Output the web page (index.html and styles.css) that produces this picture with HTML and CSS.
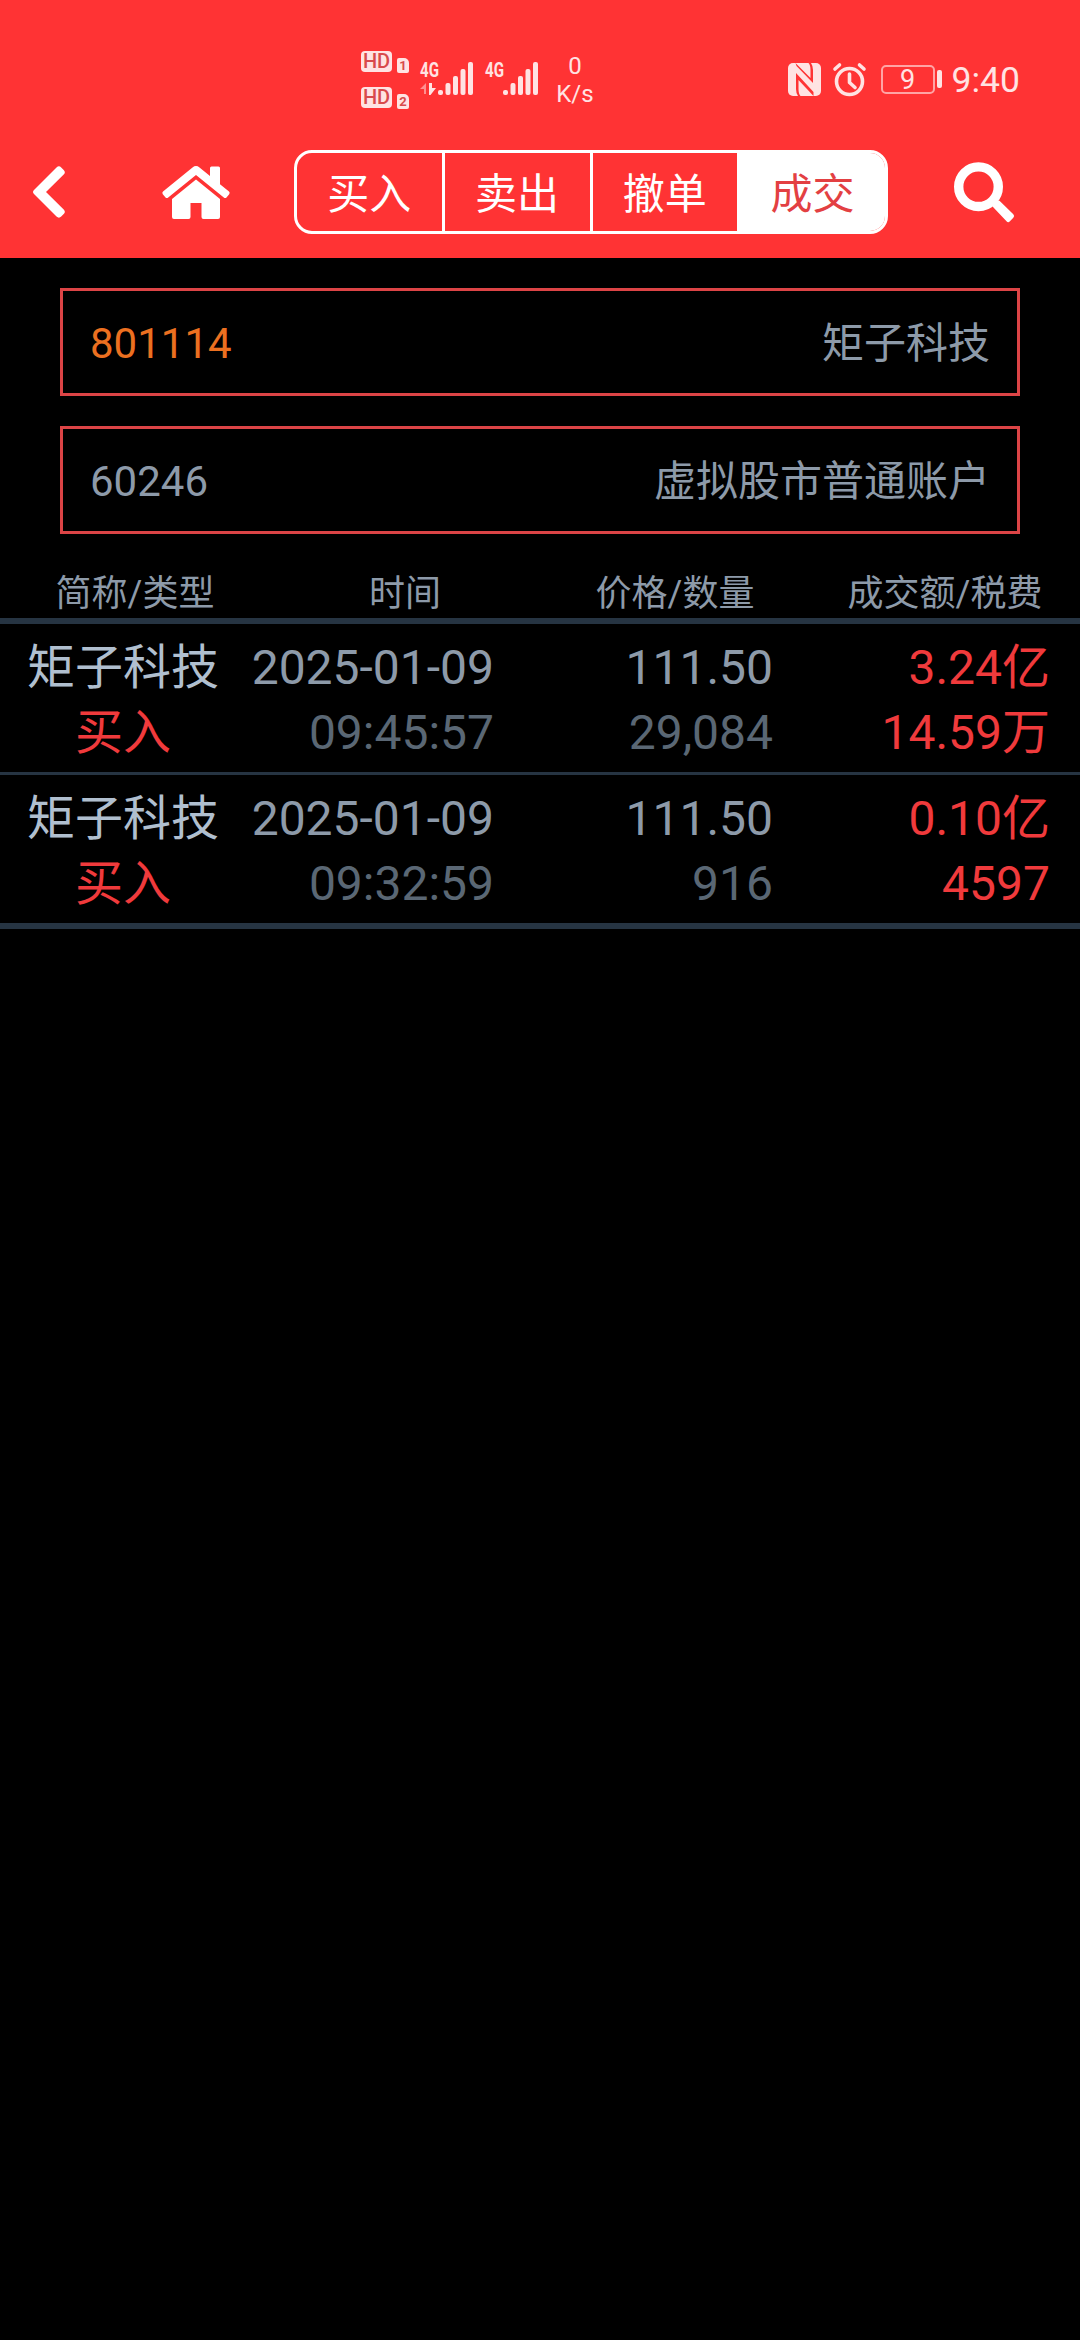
FILE: index.html
```
<!DOCTYPE html>
<html lang="zh-CN">
<head>
  <meta charset="UTF-8" />
  <meta name="viewport" content="width=device-width, initial-scale=1.0" />
  <title>成交</title>
  <link rel="stylesheet" href="styles.css">
</head>
<body>

<header class="header">
  <div class="status-bar">
    <div class="status-left">
      <div class="hd-list">
        <div class="hd-row">
          <span class="hd">HD</span>
          <span class="sim">1</span>
        </div>
        <div class="hd-row">
          <span class="hd">HD</span>
          <span class="sim">2</span>
        </div>
      </div>
      <svg class="signal" width="54" height="34" viewBox="0 0 54 34">
        <text x="0" y="15" class="net-text" textLength="19" lengthAdjust="spacingAndGlyphs">4G</text>
        <path d="M0 27 L6 21 V32 H4 V27z" fill="#ff8f8f"/>
        <path d="M9 21 h3 v5 h4 L10.500 33 H9z" fill="#ffe3e3"/>
        <g fill="#ffe3e3">
          <rect x="18" y="28" width="5" height="5" rx="2"/>
          <rect x="25.500" y="21" width="5" height="12" rx="2"/>
          <rect x="33" y="14" width="5" height="19" rx="2"/>
          <rect x="40.500" y="7" width="5" height="26" rx="2"/>
          <rect x="48" y="0" width="5" height="33" rx="2"/>
        </g>
      </svg>
      <svg class="signal" width="54" height="34" viewBox="0 0 54 34">
        <text x="0" y="15" class="net-text" textLength="19" lengthAdjust="spacingAndGlyphs">4G</text>
        <g fill="#ffe3e3">
          <rect x="18" y="28" width="5" height="5" rx="2"/>
          <rect x="25.500" y="21" width="5" height="12" rx="2"/>
          <rect x="33" y="14" width="5" height="19" rx="2"/>
          <rect x="40.500" y="7" width="5" height="26" rx="2"/>
          <rect x="48" y="0" width="5" height="33" rx="2"/>
        </g>
      </svg>
      <div class="speed"><span>0</span><span>K/s</span></div>
    </div>
    <div class="status-right">
      <svg width="33" height="33" viewBox="0 0 33 33">
        <rect width="33" height="33" rx="5" fill="#ffe3e3"/>
        <path d="M7.500 0 L22.500 15 V7 Q22.500 2 20.500 0 H23 Q25 3 25 7 V20 L8.500 3z" fill="#ff3334"/>
        <path d="M25.500 33 L10.500 17 V26 Q10.500 31 12.500 33 H10 Q8 30 8 26 V10 L25.500 29z" fill="#ff3334"/>
      </svg>
      <svg class="alarm" width="34" height="34" viewBox="0 0 34 34">
        <g fill="none" stroke="#ffe3e3" stroke-linecap="round">
          <circle cx="16.500" cy="18.500" r="13" stroke-width="3.600"/>
          <path d="M16.500 11 V19.500 L22 24.500" stroke-width="3.600" stroke-linejoin="round"/>
          <path d="M2 6 L6.500 2 M31 6 L26.500 2" stroke-width="3.600"/>
        </g>
      </svg>
      <div class="battery">9</div>
      <div class="battery-tip"></div>
      <div class="clock">9:40</div>
    </div>
  </div>

  <nav class="nav-bar">
    <a class="nav-icon back">
      <svg width="32" height="52" viewBox="0 0 32 52">
        <path d="M1 24 L23.500 1.400 Q26 -0.800 28.200 1.400 L30.700 4 Q33 6.300 30.700 8.500 L13 26 L30.700 43.500 Q33 45.800 30.700 48 L28.200 50.600 Q26 52.800 23.500 50.600 L1 28 Q-1 26 1 24z" fill="#fff"/>
      </svg>
    </a>
    <a class="nav-icon home">
      <svg width="68" height="53" viewBox="0 0 68 53">
        <path d="M30.500 1.500 Q34 -1.300 37.500 1.500 L48 10 V2 Q48 .5 49.500 .5 H56.500 Q58 .5 58 2 V18.300 L67 25.600 Q68.300 26.800 67.200 28.200 L64.500 31.400 Q63.200 32.700 61.800 31.600 L34 9 L6.200 31.600 Q4.800 32.700 3.500 31.400 L.8 28.200 Q-.3 26.800 1 25.600z" fill="#fff"/>
        <path d="M34 13.500 L58 33 V51 Q58 53 56 53 H41.500 Q39.500 53 39.500 51 V37 H28.500 V51 Q28.500 53 26.500 53 H12 Q10 53 10 51 V33z" fill="#fff"/>
      </svg>
    </a>
    <div class="tabs">
      <div class="tab">买入</div>
      <div class="tab">卖出</div>
      <div class="tab">撤单</div>
      <div class="tab active">成交</div>
    </div>
    <a class="nav-icon search">
      <svg width="61" height="61" viewBox="0 0 61 61">
        <circle cx="24.500" cy="24.700" r="19.800" fill="none" stroke="#fff" stroke-width="9.400"/>
        <path d="M39 45 V42 L42.500 38.800 H45.500 L59.300 52.300 Q61 54 59.300 55.700 L55.900 59.300 Q54.200 61 52.500 59.300z" fill="#fff"/>
      </svg>
    </a>
  </nav>
</header>

<div class="fields">
  <div class="field">
    <span class="stock-code">801114</span>
    <span>矩子科技</span>
  </div>
  <div class="field">
    <span>60246</span>
    <span>虚拟股市普通账户</span>
  </div>
</div>

<div class="list-header">
  <div>简称/类型</div>
  <div>时间</div>
  <div>价格/数量</div>
  <div>成交额/税费</div>
</div>

<div class="deal-list">
  <div class="deal">
    <div class="col-name"><div>矩子科技</div><div class="red">买入</div></div>
    <div class="col"><div>2025-01-09</div><div class="dim">09:45:57</div></div>
    <div class="col"><div>111.50</div><div class="dim">29,084</div></div>
    <div class="col red"><div>3.24亿</div><div>14.59万</div></div>
  </div>
  <div class="deal">
    <div class="col-name"><div>矩子科技</div><div class="red">买入</div></div>
    <div class="col"><div>2025-01-09</div><div class="dim">09:32:59</div></div>
    <div class="col"><div>111.50</div><div class="dim">916</div></div>
    <div class="col red"><div>0.10亿</div><div>4597</div></div>
  </div>
</div>

</body>
</html>
```
FILE: styles.css
```
* {
  box-sizing: border-box;
}

body {
  font-family: Roboto, "Noto Sans CJK SC", sans-serif;
  background-color: #000;
  color: #8d9aa9;
  margin: 0;
  padding: 0;
}

svg {
  display: block;
  flex: none;
  overflow: visible;
}

.header {
  height: 258px;
  background: #ff3334;
}

/* status bar */
.status-bar {
  display: flex;
  justify-content: space-between;
  height: 126px;
  padding: 51px 60px 0 361px;
  color: #ffe3e3;
}

.status-left,
.status-right {
  display: flex;
  align-items: flex-start;
}

.hd-list {
  display: flex;
  flex-direction: column;
  gap: 14px;
  width: 48px;
}

.hd-row {
  display: flex;
  align-items: flex-end;
  gap: 5px;
  height: 22px;
  color: #d84a4c;
}

.hd {
  width: 31px;
  height: 21px;
  margin-bottom: 1px;
  border-radius: 4px;
  background: #ffe3e3;
  font-size: 20px;
  font-weight: 500;
  line-height: 21px;
  text-align: center;
}

.sim {
  width: 12px;
  height: 15px;
  border-radius: 2px 5px 2px 2px;
  background: #ffe3e3;
  font-size: 13px;
  font-weight: 700;
  line-height: 16px;
  text-align: center;
}

.net-text {
  font: 700 20px Roboto, sans-serif;
  fill: #ffe3e3;
}

.signal {
  margin: 11px 0 0 11px;
}

.speed {
  display: flex;
  flex-direction: column;
  align-items: center;
  width: 44px;
  margin: 1px 0 0 14px;
  font-size: 24px;
  line-height: 28px;
}

.status-right {
  padding-top: 12px;
}

.alarm {
  margin-left: 12px;
}

.battery {
  width: 54px;
  height: 29px;
  margin: 2px 0 0 14px;
  border: 2px solid #ffa5a5;
  border-radius: 5px;
  font-size: 27px;
  line-height: 27px;
  text-align: center;
}

.battery-tip {
  width: 5px;
  height: 18px;
  margin: 7px 0 0 2px;
  border-radius: 2px;
  background: #ffe3e3;
}

.clock {
  margin-left: 10px;
  font-size: 35.5px;
  line-height: 35px;
}

/* top navigation */
.nav-bar {
  display: flex;
  align-items: center;
  height: 132px;
  padding: 0 65px 0 33px;
}

.home {
  margin-left: 97px;
}

.tabs {
  display: flex;
  width: 594px;
  height: 84px;
  margin-left: 64px;
  border: 3px solid #fff;
  border-radius: 18px;
  overflow: hidden;
}

.tab {
  flex: 1;
  padding-top: 3px;
  color: #fff;
  font-size: 42px;
  line-height: 77px;
  text-align: center;
}

.tab + .tab {
  border-left: 3px solid #fff;
}

.tab.active {
  background: #fff;
  color: #e34042;
}

.search {
  margin-left: auto;
}

/* stock and account */
.fields {
  display: flex;
  flex-direction: column;
  gap: 30px;
  padding: 30px 60px 0;
}

.field {
  display: flex;
  justify-content: space-between;
  align-items: center;
  height: 108px;
  padding: 3px 27px 0;
  border: 3px solid #dc4446;
  font-size: 42px;
  line-height: 49px;
}

.stock-code {
  color: #ec7020;
}

/* deals */
.list-header {
  display: grid;
  grid-template-columns: repeat(4, 1fr);
  height: 90px;
  padding-top: 37px;
  border-bottom: 6px solid #263442;
  font-size: 36px;
  line-height: 46px;
  text-align: center;
}

.deal-list {
  border-bottom: 6px solid #263442;
}

.deal {
  display: grid;
  grid-template-columns: 246px 248px 279px 277px;
  height: 148px;
  padding-top: 11px;
  font-size: 48px;
  line-height: 65px;
}

.deal + .deal {
  height: 151px;
  border-top: 3px solid #263442;
}

.col-name {
  color: #b0bfcf;
  text-align: center;
}

.col {
  text-align: right;
}

.dim {
  color: #5a6774;
}

.red {
  color: #f03a3c;
}
```
